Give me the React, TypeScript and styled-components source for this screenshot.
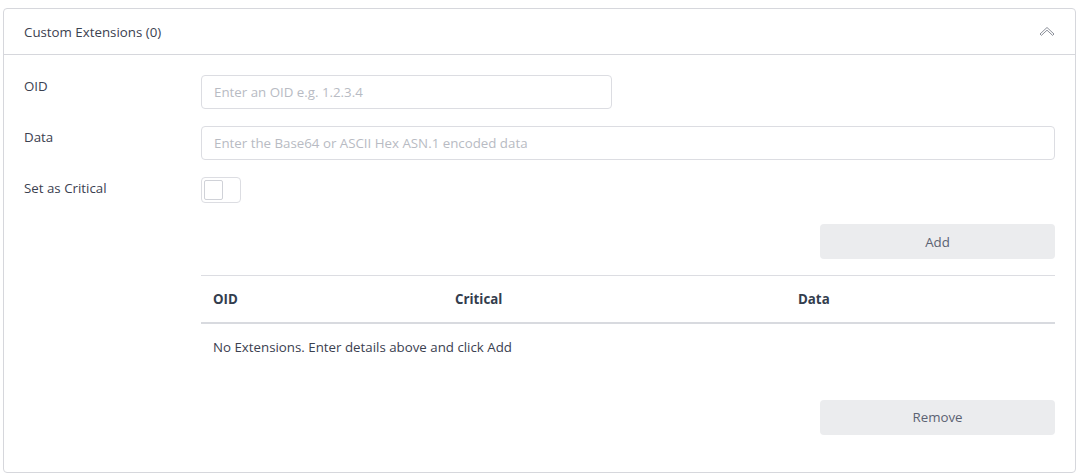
import React from "react";
import styled, { createGlobalStyle } from "styled-components";

const Global = createGlobalStyle`
  html, body { background: #fff; }
  body {
    margin: 8px 7px 0 3px;
    font-family: "Open Sans", "Noto Sans", Arial, sans-serif;
    color: #3b4150;
  }
  * { box-sizing: border-box; }
`;

const Card = styled.section`
  width: 1073px;
  border: 1px solid #d6d7dc;
  border-radius: 4px;
  background: #fff;
`;

const Header = styled.header`
  height: 46px;
  display: flex;
  align-items: center;
  justify-content: space-between;
  padding: 0 20px 0 20px;
  border-bottom: 1px solid #d6d7dc;
  font-size: 13.3px;
  color: #3b4150;
`;

const Body = styled.div`
  padding: 20px 20px 37px 20px;
`;

const FormGrid = styled.div`
  display: grid;
  grid-template-columns: 177px 1fr;
  row-gap: 17px;
`;

const Label = styled.label`
  font-size: 13.3px;
  line-height: 20px;
  padding-top: 1px;
  color: #3b4150;
`;

const Input = styled.input<{ $max?: number }>`
  width: 100%;
  max-width: ${(p) => (p.$max ? `${p.$max}px` : "none")};
  height: 34px;
  border: 1px solid #dcdde2;
  border-radius: 4px;
  padding: 0 12px;
  font-family: inherit;
  font-size: 13.3px;
  color: #3b4150;
  outline: none;
  &::placeholder { color: #b8bbc3; }
`;

const Toggle = styled.div`
  width: 40px;
  height: 26px;
  border: 1px solid #dcdde2;
  border-radius: 4px;
  padding: 2px;
  display: flex;
  align-items: center;
`;

const Knob = styled.span`
  width: 19px;
  height: 20px;
  border: 1px solid #d0d2d8;
  border-radius: 2px;
  background: #fff;
`;

const ButtonRow = styled.div<{ $top: number }>`
  display: flex;
  justify-content: flex-end;
  margin-top: ${(p) => p.$top}px;
`;

const Button = styled.button`
  width: 235px;
  height: 35px;
  border: none;
  border-radius: 4px;
  background: #ebecee;
  color: #5b6272;
  font-family: inherit;
  font-size: 13.3px;
  cursor: pointer;
`;

const TableWrap = styled.div`
  margin: 16px 0 0 177px;
`;

const Table = styled.table`
  width: 100%;
  border-collapse: collapse;
  font-size: 13.3px;
  table-layout: fixed;
`;

const Th = styled.th<{ $w?: number }>`
  width: ${(p) => (p.$w ? `${p.$w}px` : "auto")};
  text-align: left;
  font-weight: 700;
  color: #333d4d;
  height: 47px;
  padding: 0 12px;
  border-top: 1px solid #dcdde2;
  border-bottom: 2px solid #d8dadf;
`;

const Td = styled.td`
  padding: 0 12px;
  height: 48px;
  color: #3b4150;
`;

const Chevron = () => (
  <svg width="16" height="11" viewBox="0 0 16 11" fill="none">
    <path
      d="M1 8 L8 1.5 L15 8 L13.6 9.4 L8 4.2 L2.4 9.4 Z"
      stroke="#8c909a"
      strokeWidth="1"
      strokeLinejoin="round"
    />
  </svg>
);

export default function App() {
  return (
    <>
      <Global />
      <Card>
        <Header>
          <span>Custom Extensions (0)</span>
          <Chevron />
        </Header>
        <Body>
          <FormGrid>
            <Label>OID</Label>
            <Input $max={411} placeholder="Enter an OID e.g. 1.2.3.4" />
            <Label>Data</Label>
            <Input placeholder="Enter the Base64 or ASCII Hex ASN.1 encoded data" />
            <Label>Set as Critical</Label>
            <Toggle>
              <Knob />
            </Toggle>
          </FormGrid>
          <ButtonRow $top={21}>
            <Button>Add</Button>
          </ButtonRow>
          <TableWrap>
            <Table>
              <thead>
                <tr>
                  <Th $w={242}>OID</Th>
                  <Th $w={343}>Critical</Th>
                  <Th>Data</Th>
                </tr>
              </thead>
              <tbody>
                <tr>
                  <Td colSpan={3}>No Extensions. Enter details above and click Add</Td>
                </tr>
              </tbody>
            </Table>
          </TableWrap>
          <ButtonRow $top={29}>
            <Button>Remove</Button>
          </ButtonRow>
        </Body>
      </Card>
    </>
  );
}
